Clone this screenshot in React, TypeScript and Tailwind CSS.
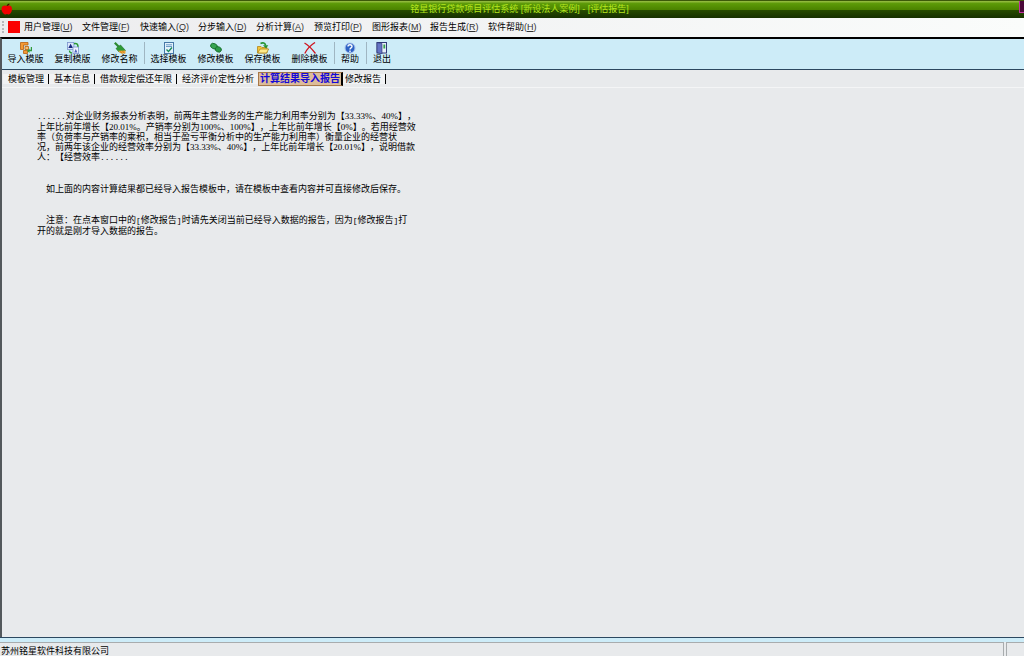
import type { ReactNode } from 'react';

const menus = [
  { label: '用户管理', key: 'U' },
  { label: '文件管理', key: 'F' },
  { label: '快速输入', key: 'Q' },
  { label: '分步输入', key: 'D' },
  { label: '分析计算', key: 'A' },
  { label: '预览打印', key: 'P' },
  { label: '图形报表', key: 'M' },
  { label: '报告生成', key: 'R' },
  { label: '软件帮助', key: 'H' },
];

const tabs = ['模板管理', '基本信息', '借款规定偿还年限', '经济评价定性分析', '计算结果导入报告', '修改报告'];
const activeTab = 4;

function AppleIcon() {
  return (
    <svg className="w-3 h-3" viewBox="0 0 12 12">
      <path d="M5.5 3C6 1.5 7 .5 8.5 .5 8.5 2 7.5 3 6 3Z" fill="#3c0a00" />
      <path d="M6 3C8 1.8 11 2.2 11 6c0 3-2 5.500-3.500 5.500-.6 0-.9-.4-1.500-.4s-.9.4-1.500.4C3 11.500.5 9 .5 6 .5 2.2 4 1.8 6 3Z" fill="#f00000" />
    </svg>
  );
}

function ImportIcon() {
  return (
    <svg className="w-3 h-3" viewBox="0 0 12 12">
      <path d="M.5.5H8V3H3.500V7.500H.5Z" fill="#f49a34" stroke="#b8600c" strokeWidth=".8" />
      <path d="M5 4.500h3.500v3H5Z" fill="#f8c070" stroke="#b8600c" strokeWidth=".8" />
      <path d="M3.500 8.500h4v3h-4Z" fill="#f49a34" stroke="#b8600c" strokeWidth=".8" />
      <path d="M11.500 5v3.500H8.500" fill="none" stroke="#2f9a3a" strokeWidth="1.400" />
      <path d="M9.500 6.500 7 8.700 9.500 11Z" fill="#2f9a3a" />
    </svg>
  );
}

function CopyIcon() {
  return (
    <svg className="w-3 h-3" viewBox="0 0 12 12">
      <rect x=".4" y=".4" width="6.500" height="7" fill="#dbe6fb" stroke="#7a92cc" strokeWidth=".8" />
      <path d="M1.300 6 3.600 1.700 6 6Z" fill="#16267c" />
      <rect x="6" y="5" width="5.600" height="6.600" fill="#eef3ff" stroke="#7a92cc" strokeWidth=".8" />
      <path d="M7.200 10.500 8.800 7l1.600 3.500Z" fill="#4b62bb" />
      <path d="M7 1.800c2.500-.8 4 0 4 3" fill="none" stroke="#2c9a32" strokeWidth="1.600" />
      <path d="M2.500 8.500C2.500 10.500 3.500 11 5 11" fill="none" stroke="#2c9a32" strokeWidth="1.300" />
    </svg>
  );
}

function BroomIcon() {
  return (
    <svg className="w-3 h-3" viewBox="0 0 12 12">
      <path d="M.8.8 4.500 4.500" stroke="#2b8a30" strokeWidth="2.200" />
      <path d="M2 6.500 6.500 3 11.500 8.500 5 10Z" fill="#2d9a35" stroke="#156a1e" strokeWidth=".6" />
      <path d="M4 8.700 11.500 8.500V11.500H7Z" fill="#f2a533" />
      <path d="M6 9.500 8.500 11.500M8.500 9 10.500 11.500" stroke="#b86a10" strokeWidth=".6" />
    </svg>
  );
}

function SelectIcon() {
  return (
    <svg className="w-3 h-3" viewBox="0 0 12 12">
      <rect x="1.500" y=".5" width="9" height="11" fill="#e3f1fb" stroke="#4779a8" />
      <path d="M3 2.800h6M3 4.500h6" stroke="#6c9cc6" />
      <path d="M3.500 7.500 5.500 9.500 9 5.500" fill="none" stroke="#178a5a" strokeWidth="1.300" />
    </svg>
  );
}

function EditIcon() {
  return (
    <svg className="w-3 h-3" viewBox="0 0 12 12">
      <ellipse cx="4" cy="4.200" rx="3.600" ry="2.600" transform="rotate(25 4 4.200)" fill="#37a552" stroke="#136b2a" strokeWidth=".8" />
      <ellipse cx="8.300" cy="7.400" rx="3.200" ry="2.600" transform="rotate(25 8.300 7.400)" fill="#2c9b48" stroke="#136b2a" strokeWidth=".8" />
    </svg>
  );
}

function SaveIcon() {
  return (
    <svg className="w-3 h-3" viewBox="0 0 12 12">
      <path d="M.5 11V4.500h3.500l1 1h5V11Z" fill="#f3c53a" stroke="#b0851a" strokeWidth=".8" />
      <path d="M.8 11 3 7h8.700L9.500 11Z" fill="#ffe989" stroke="#b0851a" strokeWidth=".8" />
      <path d="M3.500 1.500C6 .3 8 1 8.700 3.500" fill="none" stroke="#259433" strokeWidth="1.600" />
      <path d="M6 3.300h5.300L9 6.500Z" fill="#259433" />
    </svg>
  );
}

function DeleteIcon() {
  return (
    <svg className="w-3 h-3" viewBox="0 0 12 12">
      <path d="M.5 1C4 3 8 7 11.500 11.500M11 .5C7 3 3 7 .8 11.500" fill="none" stroke="#cf1420" strokeWidth="1.300" />
    </svg>
  );
}

function HelpIcon() {
  return (
    <svg className="w-3 h-3" viewBox="0 0 12 12">
      <circle cx="6" cy="6" r="5" fill="#2d62c4" stroke="#a9c2ee" />
      <path d="M4 4.500C4 2 8 2.200 8 4.500 8 6 6 5.800 6 7.500M6 8.500V10" fill="none" stroke="#fff" strokeWidth="1.400" />
    </svg>
  );
}

function ExitIcon() {
  return (
    <svg className="w-3 h-3" viewBox="0 0 12 12">
      <rect x="1" y=".5" width="9.500" height="10.500" fill="#e8effb" stroke="#303a78" />
      <path d="M1 .5 6 1.500V12L1 10.500Z" fill="#6474c4" stroke="#28306c" strokeWidth=".6" />
      <path d="M8.300 2.500v4" stroke="#35a04a" strokeWidth="1.800" />
    </svg>
  );
}

const tools: { label: string; icon: ReactNode }[][] = [
  [
    { label: '导入模版', icon: <ImportIcon /> },
    { label: '复制模版', icon: <CopyIcon /> },
    { label: '修改名称', icon: <BroomIcon /> },
  ],
  [
    { label: '选择模板', icon: <SelectIcon /> },
    { label: '修改模板', icon: <EditIcon /> },
    { label: '保存模板', icon: <SaveIcon /> },
    { label: '删除模板', icon: <DeleteIcon /> },
  ],
  [{ label: '帮助', icon: <HelpIcon /> }],
  [{ label: '退出', icon: <ExitIcon /> }],
];

function tabClass(i: number) {
  if (i === activeTab) {
    return 'h-[14px] px-px bg-[#dcbc98] border border-[#a87848] border-r-2 border-r-black text-[10px] font-bold text-[#1408d8]';
  }
  if (i === activeTab - 1) return 'pl-[5px] pr-1 bg-[#f2f3f4]';
  if (i > activeTab) return 'pl-[2px] pr-1 bg-[#f2f3f4] border-r border-black';
  return 'pl-[5px] pr-1 bg-[#f2f3f4] border-r border-black';
}

function Num({ children }: { children: ReactNode }) {
  return <span className="font-['Liberation_Serif','Noto_Sans_CJK_SC',serif]">{children}</span>;
}

function Mono({ children }: { children: ReactNode }) {
  return <span className="font-['Liberation_Mono',monospace] text-[8px]">{children}</span>;
}

export default function App() {
  return (
    <div className="min-h-screen flex flex-col bg-[#e8eaec] text-black text-[9px] leading-[10px] [text-spacing-trim:space-all] font-['Liberation_Sans','Noto_Sans_CJK_SC',sans-serif]">
      <header className="h-[18px] flex items-center border-t border-[#3c5a08] pb-[2px] bg-[linear-gradient(#9cc048,#5c9a08_15%,#4c8400_50%,#264a00_55%,#163000)] text-[#b4e61e]">
        <div className="flex-1 pl-px"><AppleIcon /></div>
        <h1 className="pl-[14px]">铭星银行贷款项目评估系统 [新设法人案例] - [评估报告]</h1>
        <div className="flex-1 self-start flex justify-end">
          <span className="w-[5px] h-3 bg-[#4a0838] border-l border-b border-[#c030a0]" />
        </div>
      </header>

      <nav className="h-[19px] flex items-center bg-linear-to-r from-[#ececee] to-[#fafcfb] pl-[2px] pb-px">
        <span className="h-3 border-l-2 border-dotted border-[#b8b8bc]" />
        <span className="w-3 h-3 mx-1 bg-[#fb0000]" />
        <div className="flex gap-2">
          {menus.map((m) => (
            <button key={m.key} className="w-[50px] text-left whitespace-nowrap">
              {m.label}<span className="text-[#333]">(<u>{m.key}</u>)</span>
            </button>
          ))}
        </div>
      </nav>

      <div className="flex-1 flex flex-col border-t-2 border-l-2 border-t-black border-l-[#53585c]">
        <div className="h-[31px] flex items-center bg-[#cdecf8] border-b border-[#2c4860] pb-[2px]">
          {tools.map((group, i) => (
            <div key={i} className={i ? 'flex pr-px border-l border-[#9fb6c2]' : 'flex pr-px'}>
              {group.map((t) => (
                <button key={t.label} className={t.label.length > 2 ? 'w-[47px] flex flex-col items-center' : 'w-[30px] flex flex-col items-center'}>
                  {t.icon}
                  {t.label}
                </button>
              ))}
            </div>
          ))}
        </div>
        <div role="tablist" className="h-[18px] flex items-center pl-px border-b border-[#f4f5f6]">
          {tabs.map((t, i) => (
            <button key={t} role="tab" aria-selected={i === activeTab} className={tabClass(i)}>
              {t}
            </button>
          ))}
        </div>
        <main role="tabpanel" className="flex-1 pl-[35px] pt-[23px] pr-4">
          <p className="mb-[21px]">
            <Mono>......</Mono>对企业财务报表分析表明，前两年主营业务的生产能力利用率分别为【<Num>33.33%</Num>、<Num>40%</Num>】，<br />
            上年比前年增长【<Num>20.01%</Num>。产销率分别为<Num>100%</Num>、<Num>100%</Num>】，上年比前年增长【<Num>0%</Num>】。若用经营效<br />
            率（负荷率与产销率的乘积，相当于盈亏平衡分析中的生产能力利用率）衡量企业的经营状<br />
            况，前两年该企业的经营效率分别为【<Num>33.33%</Num>、<Num>40%</Num>】，上年比前年增长【<Num>20.01%</Num>】，说明借款<br />
            人：【经营效率<Mono>......</Mono>
          </p>
          <p className="mb-[21px] indent-[9px]">如上面的内容计算结果都已经导入报告模板中，请在模板中查看内容并可直接修改后保存。</p>
          <p className="indent-[9px]">
            注意：在点本窗口中的<Mono>[</Mono>修改报告<Mono>]</Mono>时请先关闭当前已经导入数据的报告，因为<Mono>[</Mono>修改报告<Mono>]</Mono>打<br />
            开的就是刚才导入数据的报告。
          </p>
        </main>
      </div>

      <footer className="h-[19px] flex flex-col border-t border-[#2c4860]">
        <div className="h-1 bg-[#cdecf8]" />
        <div className="flex-1 flex gap-[2px]">
          <div className="flex-1 border-t border-r border-[#a8acae] pt-[3px] pl-px">苏州铭星软件科技有限公司</div>
          <div className="w-[18px] border-t border-l border-[#a8acae]" />
        </div>
      </footer>
    </div>
  );
}
